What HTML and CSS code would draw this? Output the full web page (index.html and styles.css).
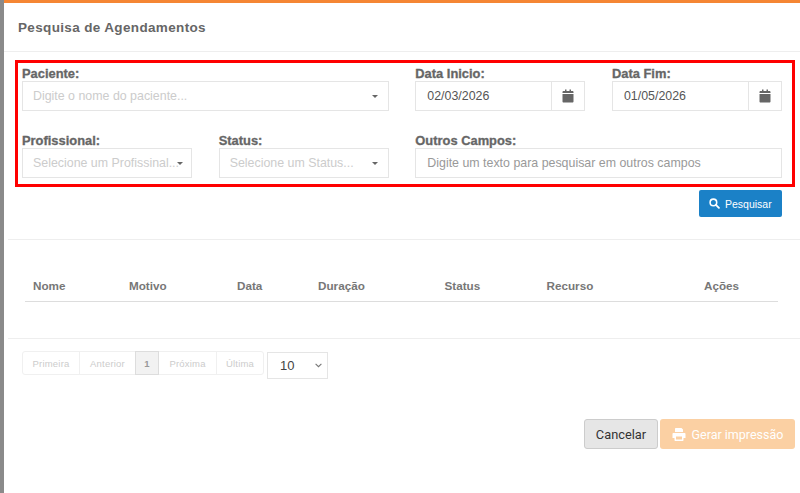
FILE: index.html
```html
<!DOCTYPE html>
<html lang="pt">
<head>
<meta charset="utf-8">
<title>Pesquisa de Agendamentos</title>
<link rel="stylesheet" href="styles.css">
</head>
<body>
<div class="modal">
  <header class="modal-header"><h1 class="modal-title">Pesquisa de Agendamentos</h1></header>
  <form class="filters">
    <div class="field span-2">
      <label class="label">Paciente:</label>
      <div class="control select"><span class="placeholder">Digite o nome do paciente...</span><i class="caret"></i></div>
    </div>
    <div class="field">
      <label class="label">Data Inicio:</label>
      <div class="control date"><span class="value">02/03/2026</span><span class="addon"><svg class="cal" viewBox="0 0 12 14"><path d="M.5 5h11v7.5c0 .6-.5 1-1 1h-9c-.5 0-1-.4-1-1zM3 .5h1.5v1.6h3V.5H9v1.6h1.500c.6 0 1 .5 1 1V4H.5v-.9c0-.5.4-1 1-1H3z"/></svg></span></div>
    </div>
    <div class="field">
      <label class="label">Data Fim:</label>
      <div class="control date"><span class="value">01/05/2026</span><span class="addon"><svg class="cal" viewBox="0 0 12 14"><path d="M.5 5h11v7.5c0 .6-.5 1-1 1h-9c-.5 0-1-.4-1-1zM3 .5h1.5v1.6h3V.5H9v1.6h1.500c.6 0 1 .5 1 1V4H.5v-.9c0-.5.4-1 1-1H3z"/></svg></span></div>
    </div>
    <div class="field">
      <label class="label">Profissional:</label>
      <div class="control select tight"><span class="placeholder">Selecione um Profissinal...</span><i class="caret"></i></div>
    </div>
    <div class="field">
      <label class="label">Status:</label>
      <div class="control select"><span class="placeholder">Selecione um Status...</span><i class="caret"></i></div>
    </div>
    <div class="field span-2">
      <label class="label">Outros Campos:</label>
      <div class="control"><span class="hint">Digite um texto para pesquisar em outros campos</span></div>
    </div>
  </form>
  <div class="search-row">
    <button class="btn-search" type="button"><svg class="search-icon" viewBox="0 0 12 12"><circle cx="4.8" cy="4.8" r="3.6" fill="none" stroke="#fff" stroke-width="1.7"/><path d="M7.6 7.6l3.2 3.2" stroke="#fff" stroke-width="2" stroke-linecap="round"/></svg>Pesquisar</button>
  </div>
  <hr class="rule rule-a">
  <div class="table-head">
    <span class="col c-nome">Nome</span>
    <span class="col c-motivo">Motivo</span>
    <span class="col c-data">Data</span>
    <span class="col c-duracao">Duração</span>
    <span class="col c-status">Status</span>
    <span class="col c-recurso">Recurso</span>
    <span class="col c-acoes">Ações</span>
  </div>
  <hr class="rule rule-b">
  <div class="paging">
    <ul class="pages">
      <li class="page p-first">Primeira</li>
      <li class="page p-prev">Anterior</li>
      <li class="page current">1</li>
      <li class="page p-next">Próxima</li>
      <li class="page p-last">Última</li>
    </ul>
    <div class="size">10<svg class="chev" viewBox="0 0 7 5"><path d="M.6.8l2.900 2.900L6.400.8" fill="none" stroke="#777" stroke-width="1.100"/></svg></div>
  </div>
  <footer class="actions">
    <button class="btn-cancel" type="button">Cancelar</button>
    <button class="btn-print" type="button"><svg class="print-icon" viewBox="0 0 14 14"><path fill="#fff" fill-rule="evenodd" d="M4 1h5.500L11 2.500V5H3V2c0-.6.4-1 1-1zM1.500 6h11c.6 0 1 .4 1 1v4h-2v2c0 .6-.4 1-1 1h-7c-.6 0-1-.4-1-1v-2h-2V7c0-.6.4-1 1-1zM4 9.500v3h6v-3z"/></svg>Gerar impressão</button>
  </footer>
</div>
</body>
</html>
```
FILE: styles.css
```css
* { box-sizing: border-box; }
html, body { margin: 0; height: 493px; overflow: hidden; }
body { background: #8a8a8a; padding-left: 4px; font-family: "Liberation Sans", Arial, sans-serif; color: #666; }
.modal { height: 493px; background: #fff; border-top: 3px solid #f58634; }
.modal-header { height: 49px; border-bottom: 1px solid #eee; padding: 15px 14px 0; margin-bottom: 8px; }
.modal-title { margin: 0; font-size: 13.5px; line-height: 20px; font-weight: 700; color: #666; letter-spacing: .35px; }
.filters { margin-left: 11px; width: 780px; height: 127px; border: 3px solid #f00; padding: 4px 4px 0; display: grid; grid-template-columns: repeat(4, 170px); column-gap: 26.67px; row-gap: 23px; align-content: start; }
.field { min-width: 0; }
.span-2 { grid-column: span 2; }
.label { display: block; height: 14px; font-size: 12.9px; line-height: 14px; font-weight: 700; color: #666; -webkit-text-stroke: .3px #666; }
.control { display: flex; align-items: center; height: 30px; border: 1px solid #e5e5e5; padding-left: 11px; font-size: 12.4px; position: relative; background: #fff; }
.select { padding-left: 10px; }
.placeholder { color: #ccc; white-space: nowrap; }
.hint { color: #999; }
.value { color: #555; flex: 1; }
.caret { position: absolute; right: 10px; top: 13px; border-left: 3px solid transparent; border-right: 3px solid transparent; border-top: 3px solid #666; }
.tight .caret { right: 8px; }
.date { padding-right: 0; }
.addon { width: 33px; height: 28px; border-left: 1px solid #e5e5e5; display: flex; align-items: center; justify-content: center; }
.cal { width: 12px; height: 14px; fill: #666; }
.search-row { display: flex; justify-content: flex-end; padding: 3px 18px 0 0; }
.btn-search { display: flex; align-items: center; gap: 5px; width: 83px; height: 27px; padding: 0 0 0 10px; border: 0; border-radius: 2px; background: #1b81c7; color: #fff; font: 10.5px "Liberation Sans", Arial, sans-serif; }
.search-icon { width: 11px; height: 11px; }
.rule { border: 0; margin: 0 0 0 4px; height: 1px; background: #eee; }
.rule-a { margin-top: 22px; }
.rule-b { margin-top: 36px; }
.table-head { margin: 38px 22px 0 21px; height: 24px; border-bottom: 1px solid #ddd; display: flex; font-size: 11.7px; font-weight: 700; color: #777; line-height: 15px; }
.col { display: block; flex: none; }
.c-nome { margin-left: 8px; width: 96px; }
.c-motivo { width: 108px; }
.c-data { width: 81px; }
.c-duracao { width: 126.5px; }
.c-status { width: 102px; }
.c-recurso { width: 157.5px; }
.paging { display: flex; align-items: flex-start; gap: 3px; margin: 12px 0 0 18px; }
.pages { display: flex; list-style: none; margin: 0; padding: 0; border: 1px solid #f0f0f0; border-radius: 3px; height: 24px; }
.page { display: flex; align-items: center; justify-content: center; font-size: 9.5px; color: #ccc; border-left: 1px solid #f0f0f0; letter-spacing: .2px; }
.page:first-child { border-left: 0; }
.p-first { width: 56px; }
.p-prev { width: 56px; }
.current { width: 24px; background: #f2f2f2; color: #999; font-weight: 700; border: 1px solid #ddd; height: 24px; margin-top: -1px; }
.p-next { width: 57px; border-left: 0; }
.p-last { width: 47px; }
.size { display: flex; align-items: center; width: 61px; height: 27px; margin-top: 1px; padding: 0 5px 0 12px; border: 1px solid #e5e5e5; font-size: 13px; color: #444; justify-content: space-between; }
.chev { width: 7px; height: 5px; }
.actions { display: flex; justify-content: flex-end; gap: 2px; margin: 40px 5px 0 0; }
.btn-cancel { width: 74px; height: 30px; padding: 0; border: 1px solid #ccc; border-radius: 3px; background: #e6e6e6; color: #333; font: 12.8px Roboto, "Liberation Sans", sans-serif; }
.btn-print { display: flex; align-items: center; justify-content: center; gap: 6px; width: 135px; height: 30px; padding: 0; border: 0; border-radius: 3px; background: #fbd0a3; color: #fff; font: 12.5px Roboto, "Liberation Sans", sans-serif; }
.print-icon { width: 14px; height: 14px; }
```
